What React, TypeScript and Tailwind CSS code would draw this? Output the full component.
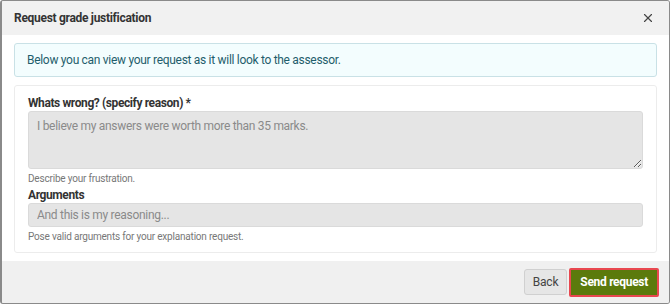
import { X } from "lucide-react";

export default function App() {
  return (
    <div className="w-[670px] h-[304px] overflow-hidden bg-white border border-[#8a8a8a] border-l-2 rounded-[3px] flex flex-col font-['Roboto',sans-serif] text-[#333]">
      <header className="h-[34px] shrink-0 bg-[#f1f1f1] flex items-center justify-between pl-[12px] pr-[14px]">
        <h1 className="text-[12px] font-bold text-[#333] tracking-[-0.3px]">Request grade justification</h1>
        <X size={14} strokeWidth={2} className="text-[#444]" />
      </header>

      <main className="flex-1 flex flex-col gap-[8px] px-[12px] pt-[8px]">
        <div className="h-[34px] rounded-[3px] border border-[#c9e1e6] bg-[#f3fdfe] flex items-center px-[12px]">
          <p className="text-[12px] text-[#1f5d6c] tracking-[-0.3px]">
            Below you can view your request as it will look to the assessor.
          </p>
        </div>

        <form className="h-[168px] rounded-[3px] border border-[#ececec] px-[13px] pt-[10px] flex flex-col">
          <label className="text-[12px] font-bold leading-[14px] tracking-[-0.4px]">Whats wrong? (specify reason) *</label>
          <textarea
            placeholder="I believe my answers were worth more than 35 marks."
            className="mt-[1px] h-[58px] w-full rounded-[3px] border border-[#dadada] bg-[#e5e5e5] px-[8px] py-[5px] text-[12px] tracking-[-0.3px] placeholder:text-[#8a8a8a] outline-none"
          />
          <p className="mt-[3px] text-[10px] text-[#777] leading-[14px] tracking-[-0.2px]">Describe your frustration.</p>
          <label className="mt-[2px] text-[12px] font-bold leading-[14px] tracking-[-0.4px]">Arguments</label>
          <input
            placeholder="And this is my reasoning..."
            className="mt-[1px] h-[24px] w-full rounded-[3px] border border-[#dadada] bg-[#e5e5e5] px-[8px] text-[12px] tracking-[-0.3px] placeholder:text-[#8a8a8a] outline-none"
          />
          <p className="mt-[3px] text-[10px] text-[#777] leading-[14px] tracking-[-0.2px]">Pose valid arguments for your explanation request.</p>
        </form>
      </main>

      <footer className="h-[42px] shrink-0 bg-[#f0f0f0] flex items-center justify-end gap-[2px] pr-[10px]">
        <button className="h-[26px] px-[8px] rounded-[3px] border border-[#d0d0d0] bg-[#e6e6e6] text-[12px] text-[#444] tracking-[-0.2px]">Back</button>
        <button className="h-[29px] px-[9px] rounded-[2px] border-2 border-[#e8474f] bg-[#5b7a0c] text-[12px] font-bold text-white tracking-[-0.3px]">Send request</button>
      </footer>
    </div>
  );
}
